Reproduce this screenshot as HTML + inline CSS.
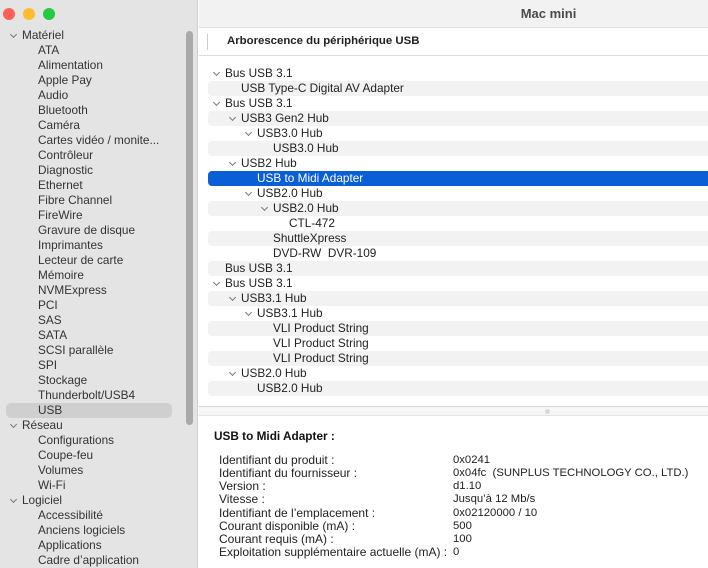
<!DOCTYPE html>
<html><head><meta charset="utf-8"><style>
*{margin:0;padding:0;box-sizing:border-box}
body{width:708px;height:568px;overflow:hidden;font-family:"Liberation Sans",sans-serif;font-size:11.8px;color:#222;background:#fff;position:relative}
#side{position:absolute;left:0;top:0;width:198px;height:568px;background:#e4e4e4;border-right:1px solid #d0d0d0}
.dot{position:absolute;top:8px;width:12px;height:12px;border-radius:50%}
.si{position:absolute;height:15px;line-height:15px;white-space:nowrap}
.chev{position:absolute;width:5px;height:5px;border-right:1.2px solid #777;border-bottom:1.2px solid #777;transform:rotate(45deg)}
#sb{position:absolute;left:186px;top:31px;width:7px;height:394px;border-radius:4px;background:#a9a9a9}
#title{position:absolute;left:199px;top:0;width:509px;height:28px;background:#f2f2f2;border-bottom:1px solid #dcdcdc;text-align:center;line-height:28px;font-weight:bold;font-size:13px;color:#4a4a4a;padding-left:190px}
#hdr{position:absolute;left:199px;top:29px;width:509px;height:27px;border-bottom:1px solid #ddd;background:#fff}
#hdr span{position:absolute;left:28px;top:6px;font-weight:bold;color:#222;font-size:11.4px}
#hdr i{position:absolute;left:8px;top:5px;width:1px;height:16px;background:#ccc}
.row{position:absolute;left:208px;width:500px;height:15px;line-height:15px;white-space:nowrap;border-radius:4px 0 0 4px}
.st{background:#f2f2f2}
.sel{background:#0a5fd6;color:#fff}
#div{position:absolute;left:199px;top:406px;width:509px;height:10px;background:#f6f6f6;border-top:1px solid #d6d6d6;border-bottom:1px solid #e2e2e2}
#div b{position:absolute;left:346px;top:2px;width:5px;height:5px;border-radius:50%;background:#d8d8d8}
.dl{position:absolute;left:219px;height:12px;line-height:12px;white-space:nowrap;font-size:12px}
.dv{position:absolute;left:453px;height:12px;line-height:12px;white-space:nowrap;font-size:11.3px}
</style></head><body>
<div id="side">
<div class="dot" style="left:3px;background:#fe5f57"></div>
<div class="dot" style="left:23px;background:#febc2e"></div>
<div class="dot" style="left:43px;background:#28c840"></div>
<div style="position:absolute;left:6px;top:403px;width:166px;height:15px;border-radius:5px;background:#cfcfcf"></div>
<div id="sb"></div>
</div>
<div id="sideitems"></div>
<div id="title">Mac mini</div>
<div id="hdr"><i></i><span>Arborescence du périphérique USB</span></div>
<div id="tree"></div>
<div id="div"><b></b></div>
<div style="position:absolute;left:214px;top:429px;font-weight:bold;color:#111">USB to Midi Adapter :</div>
<div id="det"></div>
<script>
var s=[[0,"Matériel"],[1,"ATA"],[1,"Alimentation"],[1,"Apple Pay"],[1,"Audio"],[1,"Bluetooth"],[1,"Caméra"],[1,"Cartes vidéo / monite..."],[1,"Contrôleur"],[1,"Diagnostic"],[1,"Ethernet"],[1,"Fibre Channel"],[1,"FireWire"],[1,"Gravure de disque"],[1,"Imprimantes"],[1,"Lecteur de carte"],[1,"Mémoire"],[1,"NVMExpress"],[1,"PCI"],[1,"SAS"],[1,"SATA"],[1,"SCSI parallèle"],[1,"SPI"],[1,"Stockage"],[1,"Thunderbolt/USB4"],[1,"USB"],[0,"Réseau"],[1,"Configurations"],[1,"Coupe-feu"],[1,"Volumes"],[1,"Wi-Fi"],[0,"Logiciel"],[1,"Accessibilité"],[1,"Anciens logiciels"],[1,"Applications"],[1,"Cadre d’application"]];
var h="";s.forEach(function(e,i){var y=28+15*i;if(e[0]==0){h+='<div class="chev" style="left:11px;top:'+(y+4)+'px"></div><div class="si" style="left:22px;top:'+y+'px;color:#333">'+e[1]+'</div>'}else h+='<div class="si" style="left:38px;top:'+y+'px;color:#333">'+e[1]+'</div>'});
document.getElementById("sideitems").innerHTML=h;
var t=[[0,1,"Bus USB 3.1"],[1,0,"USB Type-C Digital AV Adapter"],[0,1,"Bus USB 3.1"],[1,1,"USB3 Gen2 Hub"],[2,1,"USB3.0 Hub"],[3,0,"USB3.0 Hub"],[1,1,"USB2 Hub"],[2,0,"USB to Midi Adapter"],[2,1,"USB2.0 Hub"],[3,1,"USB2.0 Hub"],[4,0,"CTL-472"],[3,0,"ShuttleXpress"],[3,0,"DVD-RW&nbsp; DVR-109"],[0,0,"Bus USB 3.1"],[0,1,"Bus USB 3.1"],[1,1,"USB3.1 Hub"],[2,1,"USB3.1 Hub"],[3,0,"VLI Product String"],[3,0,"VLI Product String"],[3,0,"VLI Product String"],[1,1,"USB2.0 Hub"],[2,0,"USB2.0 Hub"]];
h="";t.forEach(function(e,i){var y=66+15*i;var c=i==7?"row sel":(i%2?"row st":"row");var x=17+16*e[0];h+='<div class="'+c+'" style="top:'+y+'px"></div>';if(e[1])h+='<div class="chev" style="left:'+(208+x-11)+'px;top:'+(y+4)+'px"></div>';h+='<div class="si" style="left:'+(208+x)+'px;top:'+y+'px;'+(i==7?'color:#fff':'')+'">'+e[2]+'</div>'});
document.getElementById("tree").innerHTML=h;
var d=[["Identifiant du produit :","0x0241"],["Identifiant du fournisseur :","0x04fc&nbsp; (SUNPLUS TECHNOLOGY CO., LTD.)"],["Version :","d1.10"],["Vitesse :","Jusqu’à 12 Mb/s"],["Identifiant de l’emplacement :","0x02120000 / 10"],["Courant disponible (mA) :","500"],["Courant requis (mA) :","100"],["Exploitation supplémentaire actuelle (mA) :","0"]];
h="";d.forEach(function(e,i){var y=454+13.15*i;h+='<div class="dl" style="top:'+y+'px">'+e[0]+'</div><div class="dv" style="top:'+y+'px">'+e[1]+'</div>'});
document.getElementById("det").innerHTML=h;
</script>
</body></html>
